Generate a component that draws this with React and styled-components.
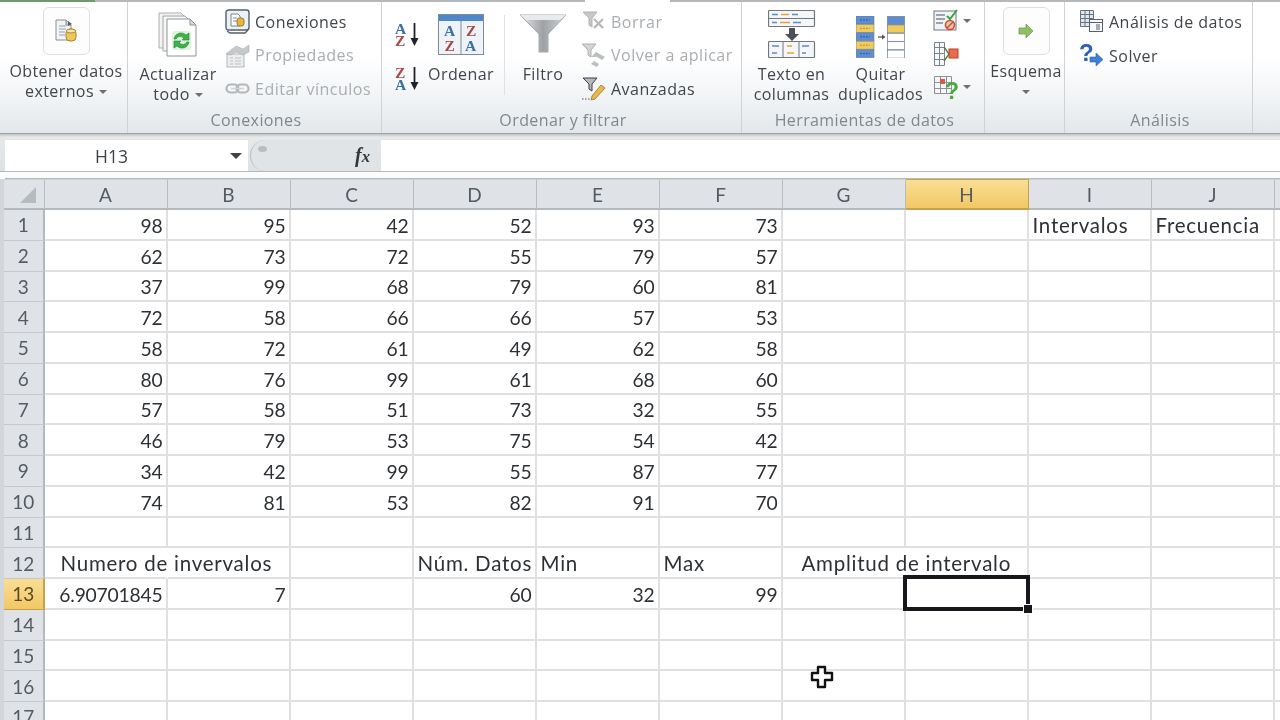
import React from "react";
import styled, { createGlobalStyle } from "styled-components";

const Global = createGlobalStyle`
  html, body { margin: 0; padding: 0; background: #fff; overflow: hidden; }
  body { width: 1280px; height: 720px; font-family: "Open Sans", "Liberation Sans", sans-serif; }
`;

const Screen = styled.div`
  position: relative; width: 1280px; height: 720px; overflow: hidden; background: #fff;
  filter: blur(0.45px);
`;
const Ribbon = styled.div`
  display: flex; height: 131px; padding-left: 4px;
  border-top: 2px solid #b4b8bb; border-bottom: 1px solid #9fa3a7;
  background: linear-gradient(#fff 0%, #fff 42%, #eef1f3 80%, #e3e7ea 100%);
  position: relative;
`;
const TopAccent = styled.i`
  position: absolute; top: -2px; height: 2px;
  left: ${p => p.$left}px; width: ${p => p.$width}px; background: ${p => p.$color};
`;
const Group = styled.section`
  display: flex; flex-direction: column; flex: none; width: ${p => p.$width}px; box-sizing: border-box;
  border-right: 1px solid #cfd3d6;
`;
const Body = styled.div`
  display: flex; align-items: flex-start; height: 103px; padding-left: ${p => p.$pad || 0}px;
`;
const GroupLabel = styled.div`
  height: 28px; text-align: center; font-size: 16px; line-height: 30px; color: #7f8790;
  letter-spacing: .4px; padding-left: 3px;
`;
const Big = styled.div`
  display: flex; flex-direction: column; align-items: center; flex: none;
  width: ${p => p.$width}px; margin-left: ${p => p.$left || 0}px;
  font-size: 16px; line-height: 20px; color: #41464b; letter-spacing: .4px;
  white-space: nowrap; text-align: center;
`;
const IconSlot = styled.div`
  height: ${p => p.$height}px; display: flex; align-items: flex-start; justify-content: center;
  padding-top: ${p => p.$top || 0}px; box-sizing: border-box;
`;
const GhostBox = styled.div`
  width: 47px; height: 48px; box-sizing: border-box; border: 1.5px solid #dcdfe2; border-radius: 6px; background: #fdfdfd;
  display: flex; align-items: center; justify-content: center;
`;
const Caret = styled.span`
  display: inline-block; width: 0; height: 0; margin-left: ${p => p.$gap ?? 5}px; vertical-align: 3px;
  border-left: 4px solid transparent; border-right: 4px solid transparent; border-top: 4px solid #6b7075;
`;
const SmallColumn = styled.div`
  display: flex; flex-direction: column; flex: none; padding-top: ${p => p.$top ?? 7}px; gap: ${p => p.$gap ?? 8.5}px;
  margin-left: ${p => p.$left || 0}px;
`;
const Small = styled.div`
  display: flex; align-items: center; height: 25px; gap: 5px; white-space: nowrap;
  font-size: 16px; letter-spacing: .5px; color: ${p => (p.$disabled ? "#a9adb1" : "#41464b")};
`;
const SortColumn = styled.div`
  display: flex; flex-direction: column; gap: 19px; padding-top: 20px; flex: none; width: 25px;
`;
const VSep = styled.div`
  flex: none; width: 1px; height: 80px; margin-top: 13px; margin-left: ${p => p.$left}px; background: #dfe2e4;
`;
const FormulaBand = styled.div`
  height: 38px; box-sizing: border-box; padding: 6px 0 0 5px; display: flex;
  border-bottom: 1px solid #b5b9bc;
  background: linear-gradient(#bfc3c6 0, #e6e8ea 3px, #dfe2e4 100%);
`;
const NameBox = styled.div`
  width: 243px; height: 31px; background: #fff; display: flex; align-items: center; position: relative;
  font-size: 17.5px; color: #3d4247; box-sizing: border-box; padding-left: 90px;
`;
const NameCaret = styled.span`
  position: absolute; left: 225px; top: 13px; width: 0; height: 0;
  border-left: 6px solid transparent; border-right: 6px solid transparent; border-top: 6px solid #3f4347;
`;
const Grip = styled.div`
  width: 130px; height: 31px; display: flex; align-items: center; justify-content: flex-end;
  background: #e1e4e7; border-radius: 16px 0 0 16px; box-sizing: border-box; padding-right: 10px;
  border-left: 1.5px solid #b9bdc0; position: relative; margin-left: 2px;
`;
const GripDot = styled.i`
  position: absolute; left: 7px; top: 6px; width: 9px; height: 6px; border-radius: 50%; background: #b9bdc1;
`;
const Fx = styled.span`
  font-family: "Liberation Serif", serif; font-style: italic; font-weight: 700; font-size: 20px; color: #33373b;
`;
const FormulaInput = styled.div`flex: 1; height: 31px; background: #fff; margin-left: 1px;`;
const ThinStrip = styled.div`
  height: 6px; margin-left: 5px; background: #fbfbfb; border-bottom: 1.5px solid #b5b9bc;
`;
const SheetWrap = styled.div`
  padding-left: 4px; background: #d3d6d9; height: 542px;
`;
const Sheet = styled.div`
  display: grid; grid-template-columns: 40.5px repeat(11, 123px);
  grid-template-rows: 31px repeat(17, 30.75px); background: #fff;
  font-family: Lato, "Liberation Sans", sans-serif; font-size: 19.3px; color: #2d3135;
`;
const ColHead = styled.div`
  display: flex; align-items: center; justify-content: center; box-sizing: border-box;
  font-size: 19px; color: #555b61;
  background: ${p => (p.$on ? "linear-gradient(#f8df95,#f2c766)" : "#dfe3e7")};
  border-right: 1px solid ${p => (p.$on ? "#c8a248" : "#b8bdc2")};
  border-bottom: 2px solid ${p => (p.$on ? "#c8a248" : "#b4b9be")};
  border-top: 1px solid ${p => (p.$on ? "#c8a248" : "#d0d4d8")};
`;
const Corner = styled(ColHead)`background: #dfe3e7; padding-left: 8px; padding-top: 1px;`;
const RowHead = styled.div`
  display: flex; align-items: center; justify-content: center; box-sizing: border-box;
  font-size: 19px; color: ${p => (p.$on ? "#5a4a20" : "#555b61")};
  background: ${p => (p.$on ? "linear-gradient(#f8df95,#f2c766)" : "#dfe3e7")};
  border-right: 2px solid ${p => (p.$on ? "#c8a248" : "#b4b9be")};
  border-bottom: 1.5px solid ${p => (p.$on ? "#c8a248" : "#c5c9cd")};
`;
const Cell = styled.div`
  position: relative; box-sizing: border-box; display: flex; align-items: center; white-space: nowrap; min-width: 0;
  justify-content: ${p => (p.$left ? "flex-start" : "flex-end")};
  padding: ${p => (p.$left ? 1 : 2)}px 3px 0 ${p => p.$indent ?? 4}px;
  font-size: ${p => (p.$left ? "20.5px" : "19.3px")};
  letter-spacing: ${p => (p.$left ? ".75px" : "-.2px")};
  border-right: 2px solid ${p => (p.$spill ? "transparent" : "#e0e0e0")};
  border-bottom: 2px solid #e0e0e0;
`;
const Selection = styled.div`
  position: absolute; left: -3px; top: -4px; right: -3px; bottom: -3px; border: 4px solid #15171a; z-index: 2;
`;
const Handle = styled.i`
  position: absolute; right: -7px; bottom: -7px; width: 8px; height: 8px; background: #15171a; border: 1px solid #fff;
`;
const Pointer = styled.svg`
  position: absolute; left: 810px; top: 665px; z-index: 3;
`;

const OpenFile = () => (
  <svg width="26" height="26" viewBox="0 0 26 26">
    <path d="M3 2h10l5 5v15H3z" fill="#f4f4f4" stroke="#8a8f94" />
    <path d="M6 8h7M6 11h7M6 14h6M6 17h6" stroke="#8aa0b8" />
    <path d="M13 2l5 5h-5z" fill="#cfd3d6" stroke="#8a8f94" />
    <path d="M15 3l4 3-4 2z" fill="#55606a" />
    <rect x="13" y="11" width="10" height="12" rx="4" fill="#eec65c" stroke="#a8862c" />
    <ellipse cx="18" cy="13" rx="4.6" ry="2" fill="#f7e7a6" stroke="#a8862c" />
  </svg>
);
const Refresh = () => (
  <svg width="42" height="46" viewBox="0 0 42 46">
    <path d="M2 1h22l5 5v30H2z" fill="#f3f3f3" stroke="#a9adb1" />
    <path d="M6 4h22l5 5v30H6z" fill="#f6f6f6" stroke="#a0a4a8" />
    <path d="M10 7h23l6 6v31H10z" fill="#fff" stroke="#8f9498" />
    <path d="M33 7l6 6h-6z" fill="#d8dbde" stroke="#8f9498" />
    <rect x="15" y="19" width="19" height="19" rx="3" fill="#e2f2df" />
    <path d="M17 27c1-6 8-8 12-4l3-2v7h-7l2-2c-3-2-6-2-8 1z" fill="#3fb04a" stroke="#1f8a33" strokeWidth=".6" />
    <path d="M32 30c-1 6-8 8-12 4l-3 2v-7h7l-2 2c3 2 6 2 8-1z" fill="#3fb04a" stroke="#1f8a33" strokeWidth=".6" />
  </svg>
);
const Connections = () => (
  <svg width="25" height="25" viewBox="0 0 25 25">
    <rect x="1" y="1" width="23" height="20" rx="2.5" fill="#eaf1f8" stroke="#54606c" strokeWidth="1.4" />
    <path d="M2 22l3 2h15l3-3" fill="none" stroke="#54606c" strokeWidth="1.4" />
    <path d="M6 5h7l2 2v10H6z" fill="#fff" stroke="#7c8288" />
    <path d="M8 9h4M8 12h4" stroke="#7a90a8" />
    <rect x="12" y="9" width="7" height="8" rx="2.5" fill="#eab53e" stroke="#9c7a20" />
  </svg>
);
const Props = () => (
  <svg width="25" height="25" viewBox="0 0 25 25">
    <rect x="2" y="11" width="17" height="13" fill="#eceded" stroke="#b4b7ba" />
    <path d="M5 15h3M10 15h6M5 18h3M10 18h6M5 21h3M10 21h6" stroke="#bfc2c5" />
    <path d="M1 11L11 3l7 3 6-4v7l-6 3-7-3-5 3z" fill="#c6c9cb" stroke="#aeb1b4" strokeWidth=".6" />
  </svg>
);
const Links = () => (
  <svg width="25" height="25" viewBox="0 0 25 25">
    <g fill="none" stroke="#b4b7ba" strokeWidth="2.2">
      <rect x="1.5" y="8.5" width="12" height="8" rx="4" />
      <rect x="11.5" y="8.5" width="12" height="8" rx="4" />
    </g>
    <path d="M6 12.5h13" stroke="#d0d2d4" strokeWidth="1.5" />
  </svg>
);
const serif = { fontFamily: "Liberation Serif, serif", fontWeight: 700 };
const AZ = ({ flip }) => (
  <svg width="25" height="25" viewBox="0 0 25 25">
    <text x="0" y="11.500" fontSize="15.500" fill={flip ? "#a84a4a" : "#3e6fa8"} style={serif}>{flip ? "Z" : "A"}</text>
    <text x="0" y="23.500" fontSize="15.500" fill={flip ? "#3e6fa8" : "#a84a4a"} style={serif}>{flip ? "A" : "Z"}</text>
    <path d="M19.500 1v17" stroke="#1f2226" strokeWidth="1.8" />
    <path d="M15.500 16h8L19.500 24z" fill="#1f2226" />
  </svg>
);
const SortBig = () => (
  <svg width="46" height="42" viewBox="0 0 46 42">
    <rect x=".5" y=".5" width="45" height="40" fill="#eef3f8" stroke="#7f8a96" />
    <rect x="1" y="1" width="44" height="6" fill="#4f86cc" />
    <path d="M23 7v33" stroke="#7f8a96" />
    <g fontSize="15.500" style={serif}>
      <text x="6" y="22" fill="#3e6fa8">A</text>
      <text x="6.500" y="37" fill="#a84a4a">Z</text>
      <text x="28" y="22" fill="#a84a4a">Z</text>
      <text x="27" y="37" fill="#3e6fa8">A</text>
    </g>
  </svg>
);
const Funnel = () => (
  <svg width="48" height="40" viewBox="0 0 48 40">
    <defs>
      <linearGradient id="fn" x1="0" x2="1">
        <stop offset="0" stopColor="#e8e9ea" /><stop offset=".5" stopColor="#9ea2a5" /><stop offset="1" stopColor="#d4d6d8" />
      </linearGradient>
    </defs>
    <path d="M1 1h46L29 20v18H20V20z" fill="url(#fn)" stroke="#a5a8ab" />
    <path d="M1 1h46l-6 5H7z" fill="#e9eaeb" />
  </svg>
);
const Clear = () => (
  <svg width="25" height="25" viewBox="0 0 25 25">
    <path d="M2 3h14l-5 6v9l-3-2V9z" fill="#c5c8ca" stroke="#aeb1b4" />
    <path d="M13 10l9 9M22 10l-9 9" stroke="#b8babd" strokeWidth="2.4" />
  </svg>
);
const Reapply = () => (
  <svg width="25" height="25" viewBox="0 0 25 25">
    <path d="M1 1h14l-5 6v7l-3-2V7z" fill="#d2d4d6" stroke="#aeb1b4" />
    <path d="M10 14l5-5 9 5-3 3-5-3M16 24l-6-3 3-3 5 3z" fill="#bcbfc1" />
  </svg>
);
const Advanced = () => (
  <svg width="25" height="25" viewBox="0 0 25 25">
    <path d="M2 2h14l-5 6v7l-3-2V8z" fill="#b7babd" stroke="#3b3f43" />
    <path d="M11 20l9-11 4 3-10 11-4 1z" fill="#e8b84a" stroke="#8b6a1e" strokeWidth=".7" />
    <path d="M1 23h9" stroke="#55595d" strokeDasharray="1.5 1.5" />
  </svg>
);
const TextCols = () => (
  <svg width="48" height="48" viewBox="0 0 48 48">
    <rect x=".5" y=".5" width="46" height="16" rx="1" fill="#f4f6f8" stroke="#6f7880" strokeWidth="1.2" />
    <path d="M1 8.500h46" stroke="#6f7880" />
    <path d="M4 4.500h6M24 4.500h6M4 12.500h5M25 12.500h8" stroke="#5b8cc8" strokeWidth="1.4" />
    <path d="M13 4.500h8M12 12.500h10" stroke="#e6a33a" strokeWidth="1.4" />
    <path d="M21 18h6v6h4l-7 7-7-7h4z" fill="#4c5156" />
    <rect x=".5" y="31.500" width="46" height="16" rx="1" fill="#f4f6f8" stroke="#6f7880" strokeWidth="1.2" />
    <path d="M15 32v15M31 32v15" stroke="#6f7880" />
    <path d="M4 36h7M4 43h5M34 36h7M34 43h4" stroke="#5b8cc8" strokeWidth="1.4" />
    <path d="M19 36h5M19 43h7" stroke="#e6a33a" strokeWidth="1.4" />
  </svg>
);
const ROWS = [0, 8.4, 16.8, 25.2, 33.6];
const Dup = () => (
  <svg width="50" height="42" viewBox="0 0 50 42">
    {ROWS.map((y, i) => (
      <g key={y}>
        <rect x="0" y={y} width="18" height="8" fill={i % 2 ? "#f0cb5e" : "#5d8ed0"} stroke="#6c7c90" strokeWidth=".6" />
        <path d={`M4 ${y + 4}h10`} stroke={i % 2 ? "#b98f2a" : "#2c5a9a"} strokeDasharray="2 1" />
      </g>
    ))}
    {ROWS.map((y, i) => (
      <rect key={i} x="31.500" y={y + .5} width="17" height="8" fill={i === 0 ? "#5d8ed0" : i === 1 ? "#f0cb5e" : "#fff"} stroke="#6c7c90" strokeWidth=".7" />
    ))}
    <path d="M22 21h5" stroke="#555" strokeWidth="1.3" /><path d="M26 18.500l3.500 2.500-3.500 2.500z" fill="#555" />
  </svg>
);
const Validate = () => (
  <svg width="26" height="26" viewBox="0 0 26 26">
    <rect x="1" y="3" width="22" height="19" fill="#f2f3f4" stroke="#6f7880" />
    <path d="M3 7h9M3 11h9M3 15h7" stroke="#7d8a98" strokeWidth="1.4" />
    <path d="M14 8l3 3 7-9" fill="none" stroke="#3ea04a" strokeWidth="2" />
    <circle cx="17" cy="17" r="4.500" fill="#f4c6b4" stroke="#d24b2a" strokeWidth="1.6" />
    <path d="M14 20l6-6" stroke="#d24b2a" strokeWidth="1.5" />
  </svg>
);
const Consolidate = () => (
  <svg width="26" height="26" viewBox="0 0 26 26">
    <path d="M1.500 1.500h10v5h-10zM1.500 6.500h10v6h-10zM1.500 12.500h10v6h-10zM1.500 18.500h10v6h-10zM6.500 1.500v23" fill="#f7f8f9" stroke="#7a8490" />
    <path d="M11 6l5 7-5 7" fill="none" stroke="#4f7a3a" strokeWidth="1.3" />
    <rect x="16" y="8" width="9" height="9" fill="#ef6a4a" stroke="#b4442a" />
  </svg>
);
const WhatIf = () => (
  <svg width="26" height="26" viewBox="0 0 26 26">
    <path d="M1.500 2.500h17v17h-17zM1.500 8.500h17M1.500 14.500h17M7.500 2.500v17M13.500 2.500v17" fill="#f7f8f9" stroke="#8a929a" />
    <rect x="7" y="5" width="5" height="5" fill="#d8584a" />
    <text x="12" y="25" fontSize="23" fill="#4ea83c" style={{ fontFamily: "Liberation Sans, sans-serif", fontWeight: 700 }}>?</text>
  </svg>
);
const GreenArrow = () => (
  <svg width="16" height="16" viewBox="0 0 16 16">
    <path d="M1 5h7V1l7 7-7 7v-4H1z" fill="#8cc265" stroke="#6b8f4e" strokeWidth=".7" />
  </svg>
);
const DataTable = () => (
  <svg width="25" height="25" viewBox="0 0 25 25">
    <path d="M1.500 1.500h13v16h-13zM1.500 5.500h13M1.500 9.500h13M1.500 13.500h13M6 1.500v16M10.500 1.500v16" fill="#dfe8f2" stroke="#66727e" />
    <rect x="10.500" y="10.500" width="13" height="12" fill="#f7f8f9" stroke="#55606a" />
    <path d="M10.500 13.500h13M17 16h4M17 18h4M17 20h4" stroke="#55606a" />
  </svg>
);
const SolverIcon = () => (
  <svg width="25" height="25" viewBox="0 0 25 25">
    <text x="0" y="18" fontSize="24" fill="#2b63b4" style={{ fontFamily: "Liberation Sans, sans-serif", fontWeight: 700 }}>?</text>
    <path d="M11 14h6v-4l7 6.500-7 6.500v-4h-6z" fill="#3f7fd6" stroke="#2b5ea8" strokeWidth=".6" />
  </svg>
);

const COLS = ["A", "B", "C", "D", "E", "F", "G", "H", "I", "J", "K"];
const DATA = [
  [98, 95, 42, 52, 93, 73], [62, 73, 72, 55, 79, 57], [37, 99, 68, 79, 60, 81], [72, 58, 66, 66, 57, 53],
  [58, 72, 61, 49, 62, 58], [80, 76, 99, 61, 68, 60], [57, 58, 51, 73, 32, 55], [46, 79, 53, 75, 54, 42],
  [34, 42, 99, 55, 87, 77], [74, 81, 53, 82, 91, 70],
];
const TEXT = {
  "1-I": { t: "Intervalos", left: true }, "1-J": { t: "Frecuencia", left: true },
  "12-A": { t: "Numero de invervalos", left: true, indent: 16, spill: true },
  "12-D": { t: "Núm. Datos", left: true }, "12-E": { t: "Min", left: true }, "12-F": { t: "Max", left: true },
  "12-G": { t: "Amplitud de intervalo", left: true, indent: 19, spill: true },
  "13-A": { t: "6.90701845" }, "13-B": { t: "7" }, "13-D": { t: "60" }, "13-E": { t: "32" }, "13-F": { t: "99" },
};
const lookup = (r, c, ci) => {
  if (r <= 10 && ci < 6) return { t: DATA[r - 1][ci] };
  return TEXT[`${r}-${c}`] || {};
};

export default function App() {
  return (
    <Screen>
      <Global />
      <Ribbon>
        <TopAccent $left={0} $width={95} $color="#6c9a68" />
        <TopAccent $left={585} $width={85} $color="#ffffff" />
        <Group $width={124}>
          <Body>
            <Big $width={124}>
              <IconSlot $height={59} $top={5}><GhostBox><OpenFile /></GhostBox></IconSlot>
              <span>Obtener datos</span>
              <span>externos<Caret /></span>
            </Big>
          </Body>
          <GroupLabel />
        </Group>
        <Group $width={254}>
          <Body $pad={6}>
            <Big $width={88}>
              <IconSlot $height={62} $top={10}><Refresh /></IconSlot>
              <span>Actualizar</span>
              <span>todo<Caret /></span>
            </Big>
            <SmallColumn $left={3}>
              <Small><Connections />Conexiones</Small>
              <Small $disabled><Props />Propiedades</Small>
              <Small $disabled><Links />Editar vínculos</Small>
            </SmallColumn>
          </Body>
          <GroupLabel>Conexiones</GroupLabel>
        </Group>
        <Group $width={360}>
          <Body $pad={13}>
            <SortColumn><AZ /><AZ flip /></SortColumn>
            <Big $width={76} $left={3}>
              <IconSlot $height={62} $top={12}><SortBig /></IconSlot>
              <span>Ordenar</span>
            </Big>
            <VSep $left={5} />
            <Big $width={76}>
              <IconSlot $height={62} $top={12}><Funnel /></IconSlot>
              <span>Filtro</span>
            </Big>
            <SmallColumn>
              <Small $disabled><Clear />Borrar</Small>
              <Small $disabled><Reapply />Volver a aplicar</Small>
              <Small><Advanced />Avanzadas</Small>
            </SmallColumn>
          </Body>
          <GroupLabel>Ordenar y filtrar</GroupLabel>
        </Group>
        <Group $width={243}>
          <Body>
            <Big $width={97} $left={1}>
              <IconSlot $height={62} $top={8}><TextCols /></IconSlot>
              <span>Texto en</span>
              <span>columnas</span>
            </Big>
            <Big $width={81}>
              <IconSlot $height={62} $top={14}><Dup /></IconSlot>
              <span>Quitar</span>
              <span>duplicados</span>
            </Big>
            <SmallColumn $left={12} $top={6} $gap={8}>
              <Small><Validate /><Caret $gap={-1} /></Small>
              <Small><Consolidate /></Small>
              <Small><WhatIf /><Caret $gap={-1} /></Small>
            </SmallColumn>
          </Body>
          <GroupLabel>Herramientas de datos</GroupLabel>
        </Group>
        <Group $width={80}>
          <Body>
            <Big $width={82}>
              <IconSlot $height={59} $top={5}><GhostBox><GreenArrow /></GhostBox></IconSlot>
              <span>Esquema</span>
              <span><Caret $gap={0} /></span>
            </Big>
          </Body>
          <GroupLabel />
        </Group>
        <Group $width={188}>
          <Body $pad={14}>
            <SmallColumn $gap={9}>
              <Small><DataTable />Análisis de datos</Small>
              <Small><SolverIcon />Solver</Small>
            </SmallColumn>
          </Body>
          <GroupLabel>Análisis</GroupLabel>
        </Group>
      </Ribbon>
      <FormulaBand>
        <NameBox>H13<NameCaret /></NameBox>
        <Grip><GripDot /><Fx>f<small>x</small></Fx></Grip>
        <FormulaInput />
      </FormulaBand>
      <ThinStrip />
      <SheetWrap>
        <Sheet>
          <Corner>
            <svg width="18" height="18" viewBox="0 0 18 18"><path d="M17 1v16H1z" fill="#b6bbc0" /></svg>
          </Corner>
          {COLS.map(c => <ColHead key={c} $on={c === "H"}>{c}</ColHead>)}
          {Array.from({ length: 17 }, (_, i) => i + 1).map(r => (
            <React.Fragment key={r}>
              <RowHead $on={r === 13}>{r}</RowHead>
              {COLS.map((c, ci) => {
                const v = lookup(r, c, ci);
                return (
                  <Cell key={c} $left={v.left} $indent={v.indent} $spill={v.spill}>
                    {v.t}
                    {r === 13 && c === "H" && <Selection><Handle /></Selection>}
                  </Cell>
                );
              })}
            </React.Fragment>
          ))}
        </Sheet>
      </SheetWrap>
      <Pointer width="24" height="24" viewBox="0 0 24 24">
        <path d="M8 2h7v6h7v7h-7v7H8v-7H2V8h6z" fill="#fff" stroke="#111" strokeWidth="2.4" strokeLinejoin="round" />
      </Pointer>
    </Screen>
  );
}
